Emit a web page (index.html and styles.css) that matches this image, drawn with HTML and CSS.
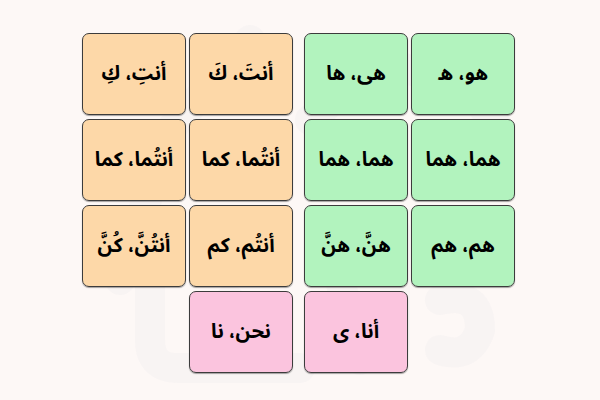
FILE: index.html
```html
<!DOCTYPE html>
<html lang="ar">
<head>
<meta charset="utf-8">
<link rel="stylesheet" href="styles.css">
</head>
<body>
<div class="stage">
  <svg class="watermark" width="600" height="400" viewBox="0 0 600 400">
    <path d="M150 250 L150 340 Q150 368 178 368 L300 368" />
    <path d="M230 300 L230 345" />
    <path d="M330 240 L360 360" />
    <path d="M395 230 L395 345" />
    <path d="M310 120 L380 60 L470 90 L500 130" />
    <path d="M440 300 Q480 290 480 330 Q470 360 440 350" />
    <path d="M250 40 L170 130 L120 280" />
  </svg>
  <div class="grid">
    <div class="card orange" dir="rtl">أنتِ، كِ</div>
    <div class="card orange" dir="rtl">أنتَ، كَ</div>
    <div class="spacer"></div>
    <div class="card green" dir="rtl">هی، ها</div>
    <div class="card green" dir="rtl">هو، ه</div>

    <div class="card orange" dir="rtl">أنتُما، كما</div>
    <div class="card orange" dir="rtl">أنتُما، كما</div>
    <div class="spacer"></div>
    <div class="card green" dir="rtl">هما، هما</div>
    <div class="card green" dir="rtl">هما، هما</div>

    <div class="card orange" dir="rtl">أنتُنَّ، كُنَّ</div>
    <div class="card orange" dir="rtl">أنتُم، كم</div>
    <div class="spacer"></div>
    <div class="card green" dir="rtl">هنَّ، هنَّ</div>
    <div class="card green" dir="rtl">هم، هم</div>

    <div class="empty"></div>
    <div class="card pink" dir="rtl">نحن، نا</div>
    <div class="spacer"></div>
    <div class="card pink" dir="rtl">أنا، ی</div>
    <div class="empty"></div>
  </div>
</div>
</body>
</html>
```
FILE: styles.css
```css
html, body {
  margin: 0;
  padding: 0;
  background: #fdf8f6;
}
.stage {
  position: relative;
  width: 600px;
  height: 400px;
  overflow: hidden;
}
.watermark {
  position: absolute;
  left: 0;
  top: 0;
  fill: none;
  stroke: rgba(225, 228, 235, 0.18);
  stroke-width: 30;
  stroke-linecap: round;
  stroke-linejoin: round;
}
.grid {
  position: relative;
  display: grid;
  grid-template-columns: 104px 104px 5px 104px 104px;
  grid-template-rows: repeat(4, 82px);
  column-gap: 3px;
  row-gap: 4px;
  padding: 33px 0 0 82px;
}
.card {
  box-sizing: border-box;
  border: 1px solid #3c3c3c;
  border-radius: 7px;
  box-shadow: 0 1px 1px rgba(0, 0, 0, 0.35);
  display: flex;
  align-items: center;
  justify-content: center;
  font-family: "Noto Sans Arabic", "Noto Sans", sans-serif;
  font-size: 20px;
  font-weight: 700;
  color: #000;
}
.orange { background: rgba(253, 214, 163, 0.95); }
.green { background: rgba(174, 242, 186, 0.95); }
.pink { background: rgba(251, 193, 220, 0.95); }
```
